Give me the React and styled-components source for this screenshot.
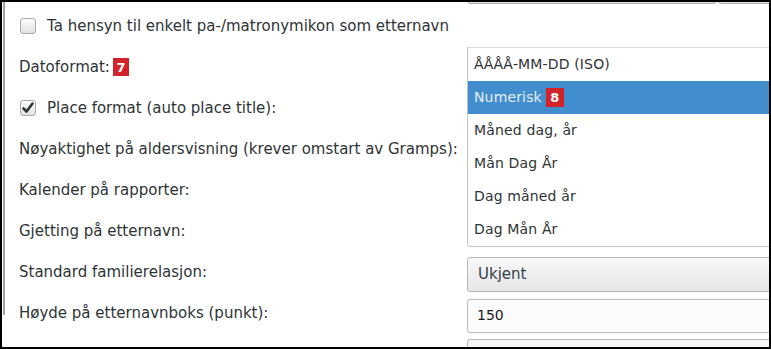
import React from "react";
import styled, { createGlobalStyle } from "styled-components";

const GlobalStyle = createGlobalStyle`
  html, body { margin: 0; padding: 0; background: #ffffff; }
  body { font-family: "DejaVu Sans", "Noto Sans", sans-serif; }
`;

const Frame = styled.div`
  position: relative;
  width: 771px;
  height: 349px;
  box-sizing: border-box;
  border: 2px solid #000;
  background: #fff;
  overflow: hidden;
`;

const Pane = styled.div`
  margin-left: 1px;
  height: 100%;
  border-left: 2px solid #a4a4a4;
  padding-left: 14px;
`;

const Grid = styled.div`
  display: grid;
  grid-template-columns: 448px 330px;
  grid-auto-rows: 34px;
  row-gap: 7px;
  margin-top: -32px;
  font-size: 15px;
  color: #2e3436;
`;

const Label = styled.div`
  display: flex;
  align-items: center;
  gap: 3px;
  padding-bottom: 4px;
  white-space: nowrap;
  grid-column: ${(p) => (p.$wide ? "1 / span 2" : "auto")};
`;

const Cell = styled.div`
  display: flex;
  gap: 1px;
  min-width: 0;
`;

const Check = styled.span`
  position: relative;
  width: 16px;
  height: 16px;
  margin-left: 1px;
  margin-right: 8px;
  box-sizing: border-box;
  border: 1px solid #a9a9a9;
  border-radius: 3px;
  background: linear-gradient(#fdfdfd, #e2e2e2);
  flex: none;
`;

const CheckMark = styled.svg`
  position: absolute;
  left: 0px;
  top: 0px;
`;

const Badge = styled.span`
  display: inline-flex;
  align-items: center;
  justify-content: center;
  width: ${(p) => p.$w || 16}px;
  height: ${(p) => p.$h || 18}px;
  background: #d2232a;
  color: #fff;
  font-family: "DejaVu Sans", sans-serif;
  font-weight: bold;
  font-size: 13px;
  margin-left: ${(p) => p.$ml || 0}px;
`;

const ButtonBox = styled.div`
  box-sizing: border-box;
  height: 34px;
  width: ${(p) => (p.$w ? p.$w + "px" : "auto")};
  flex: ${(p) => (p.$w ? "none" : "1")};
  border: 1px solid #acacac;
  border-radius: 3px;
  background: linear-gradient(#f7f7f7, #e3e3e3);
`;

const Combo = styled.div`
  box-sizing: border-box;
  flex: 1;
  height: 35px;
  display: flex;
  align-items: center;
  padding-left: 10px;
  padding-bottom: 2px;
  border: 1px solid #b6b6b6;
  border-radius: 3px;
  background: linear-gradient(#f8f8f8, #e6e6e6);
  color: #34404c;
`;

const Entry = styled.div`
  box-sizing: border-box;
  flex: 1;
  height: 34px;
  margin-top: 1px;
  display: flex;
  align-items: center;
  padding-left: 9px;
  padding-bottom: 2px;
  border: 1px solid #bdbdbd;
  border-radius: 3px;
  background: #fcfcfc;
  color: #1a1a1a;
  font-size: 14px;
`;

const Menu = styled.div`
  position: absolute;
  left: 465px;
  top: 45px;
  width: 330px;
  box-sizing: border-box;
  background: #fff;
  border: 1px solid #c2c2c2;
  border-top-color: #dedede;
  border-radius: 0 0 3px 3px;
  font-size: 14px;
  letter-spacing: 0.15px;
`;

const Item = styled.div`
  height: 33px;
  display: flex;
  align-items: center;
  padding-left: 6px;
  padding-bottom: 1px;
  box-sizing: border-box;
  background: ${(p) => (p.$active ? "#428dcd" : "transparent")};
  color: ${(p) => (p.$active ? "#e6eff8" : "#2e3436")};
`;

const CheckBox = ({ checked }) => (
  <Check>
    {checked && (
      <CheckMark width="14" height="14" viewBox="0 0 14 14">
        <path d="M2.5 7.5 L5.5 10.5 L11.5 2.5" fill="none" stroke="#2e3436" strokeWidth="2.6" strokeLinecap="round" strokeLinejoin="round" />
      </CheckMark>
    )}
  </Check>
);

export default function App() {
  const items = ["ÅÅÅÅ-MM-DD (ISO)", "Numerisk", "Måned dag, år", "Mån Dag År", "Dag måned år", "Dag Mån År"];
  return (
    <>
      <GlobalStyle />
      <Frame>
        <Pane>
          <Grid>
            <Label />
            <Cell>
              <ButtonBox $w={250} />
              <ButtonBox />
            </Cell>

            <Label $wide>
              <CheckBox />
              Ta hensyn til enkelt pa-/matronymikon som etternavn
            </Label>

            <Label>
              Datoformat:
              <Badge>7</Badge>
            </Label>
            <Cell />

            <Label>
              <CheckBox checked />
              Place format (auto place title):
            </Label>
            <Cell />

            <Label>Nøyaktighet på aldersvisning (krever omstart av Gramps):</Label>
            <Cell />

            <Label>Kalender på rapporter:</Label>
            <Cell />

            <Label>Gjetting på etternavn:</Label>
            <Cell />

            <Label>Standard familierelasjon:</Label>
            <Cell>
              <Combo>Ukjent</Combo>
            </Cell>

            <Label>Høyde på etternavnboks (punkt):</Label>
            <Cell>
              <Entry>150</Entry>
            </Cell>

            <Label />
            <Cell>
              <Combo />
            </Cell>
          </Grid>
        </Pane>
        <Menu>
          {items.map((t, i) => (
            <Item key={t} $active={i === 1}>
              {t}
              {i === 1 && <Badge $w={18} $h={19} $ml={4}>8</Badge>}
            </Item>
          ))}
        </Menu>
      </Frame>
    </>
  );
}
